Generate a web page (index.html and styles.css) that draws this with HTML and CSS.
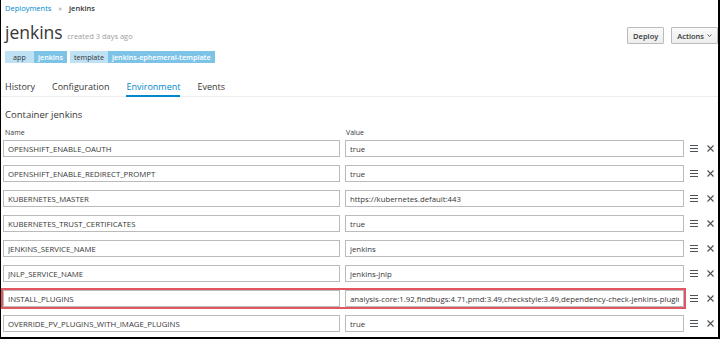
FILE: index.html
```html
<!DOCTYPE html>
<html lang="en">
<head>
    <meta charset="UTF-8">
    <title>jenkins - Deployments</title>
    <link rel="stylesheet" href="styles.css">
</head>
<body>
    <div class="frame">
        <div class="breadcrumb">
            <a href="#">Deployments</a>
            <span class="sep">&raquo;</span>
            <strong>jenkins</strong>
        </div>

        <div class="page-header">
            <div class="title-block">
                <h1>jenkins <small>created 3 days ago</small></h1>
                <div class="labels">
                    <span class="label"><span class="key">app</span><span class="val">jenkins</span></span>
                    <span class="label"><span class="key">template</span><span class="val">jenkins-ephemeral-template</span></span>
                </div>
            </div>
            <div class="actions">
                <button class="btn">Deploy</button>
                <button class="btn">Actions <svg class="caret" width="5" height="3" viewBox="0 0 5 3"><path d="M0.5 0.5l2 2 2-2" fill="none" stroke="#363636" stroke-width="0.8"/></svg></button>
            </div>
        </div>

        <!-- Вкладки -->
        <ul class="tabs">
            <li>History</li>
            <li>Configuration</li>
            <li class="active">Environment</li>
            <li>Events</li>
        </ul>

        <h2 class="container-title">Container jenkins</h2>

        <div class="env">
            <div class="env-head">
                <span class="col-name">Name</span>
                <span class="col-value">Value</span>
            </div>
            <div class="env-rows" id="envRows"></div>
        </div>
    </div>

    <script>
        const envVars = [
            ['OPENSHIFT_ENABLE_OAUTH', 'true'],
            ['OPENSHIFT_ENABLE_REDIRECT_PROMPT', 'true'],
            ['KUBERNETES_MASTER', 'https://kubernetes.default:443'],
            ['KUBERNETES_TRUST_CERTIFICATES', 'true'],
            ['JENKINS_SERVICE_NAME', 'jenkins'],
            ['JNLP_SERVICE_NAME', 'jenkins-jnlp'],
            ['INSTALL_PLUGINS', 'analysis-core:1.92,findbugs:4.71,pmd:3.49,checkstyle:3.49,dependency-check-jenkins-plugin:2.1.1', true],
            ['OVERRIDE_PV_PLUGINS_WITH_IMAGE_PLUGINS', 'true']
        ];

        const rows = document.getElementById('envRows');
        envVars.forEach(function(item) {
            const row = document.createElement('div');
            row.className = 'env-row' + (item[2] ? ' highlight' : '');
            row.innerHTML =
                '<div class="pair">' +
                    '<input class="field name" type="text" value="' + item[0] + '">' +
                    '<input class="field value" type="text" value="' + item[1] + '">' +
                '</div>' +
                '<span class="icon drag"><svg width="8" height="7" viewBox="0 0 8 7"><path d="M0 0.5h8M0 3.5h8M0 6.5h8" stroke="#4d5258" stroke-width="1"/></svg></span>' +
                '<span class="icon remove"><svg width="7" height="7" viewBox="0 0 7 7"><path d="M0.5 0.5l6 6M6.5 0.5l-6 6" stroke="#4d5258" stroke-width="1.1"/></svg></span>';
            rows.appendChild(row);
        });
    </script>
</body>
</html>
```

FILE: styles.css
```css
* {
    box-sizing: border-box;
}

html, body {
    margin: 0;
    height: 100%;
}

body {
    font-family: "Open Sans", "Liberation Sans", sans-serif;
    color: #363636;
    background: #fff;
}

.frame {
    height: 339px;
    border-left: 1px solid #000;
    border-right: 2px solid #000;
    border-bottom: 2px solid #000;
    overflow: hidden;
}

.breadcrumb {
    font-size: 7.5px;
    line-height: 10px;
    padding: 3px 0 0 4px;
    height: 22px;
}

.breadcrumb a {
    color: #0088ce;
    text-decoration: none;
}

.breadcrumb .sep {
    color: #8b8d8f;
    margin: 0 5px;
}

.breadcrumb strong {
    font-weight: 600;
}

.page-header {
    display: flex;
    justify-content: space-between;
    align-items: flex-start;
}

.title-block {
    padding-left: 4px;
}

h1 {
    font-size: 17.5px;
    font-weight: 400;
    margin: 0;
    line-height: 21px;
}

h1 small {
    font-size: 7.5px;
    color: #9c9c9c;
}

.labels {
    display: flex;
    gap: 3px;
    margin-top: 4px;
}

.label {
    display: flex;
    font-size: 7.2px;
    line-height: 12px;
}

.label .key {
    background: #bee1f4;
    padding: 0 4px;
    min-width: 29px;
    text-align: center;
    color: #363636;
}

.label .val {
    background: #7dc3e8;
    color: #fff;
    padding: 0 4px;
    font-weight: 600;
}

.actions {
    display: flex;
    gap: 7px;
    padding-top: 5px;
}

.btn {
    display: flex;
    align-items: center;
    gap: 3px;
    font-family: inherit;
    font-size: 7.5px;
    font-weight: 600;
    color: #363636;
    height: 17px;
    padding: 0 5px;
    border: 1px solid #bbb;
    border-radius: 1px;
    background: linear-gradient(#fafafa, #ededed);
}

.tabs {
    list-style: none;
    display: flex;
    margin: 12px 0 0 0;
    padding: 0 0 0 4px;
    border-bottom: 1px solid #ededed;
    font-size: 9px;
    line-height: 11px;
}

.tabs li {
    padding: 6px 0 3px;
    margin-right: 17px;
    margin-bottom: -1px;
    border-bottom: 2px solid transparent;
}

.tabs li.active {
    color: #0088ce;
    border-bottom-color: #0088ce;
}

.container-title {
    font-size: 9.5px;
    line-height: 13px;
    font-weight: 400;
    margin: 11px 0 0 4px;
}

.env-head {
    display: flex;
    font-size: 7px;
    line-height: 10px;
    margin-top: 7px;
    padding-left: 4px;
}

.col-name {
    width: 341px;
}

.env-rows {
    display: grid;
    gap: 8px;
    margin-top: 2px;
}

.env-row {
    display: flex;
    align-items: center;
    padding-left: 2px;
    height: 17px;
}

.pair {
    display: flex;
    gap: 5px;
}

.field {
    font-family: inherit;
    font-size: 7.8px;
    color: #363636;
    height: 17px;
    border: 1px solid #bbb;
    padding: 0 4px;
    background: #fff;
    outline: none;
}

.field.name {
    width: 337px;
}

.field.value {
    width: 339px;
}

.highlight .pair {
    outline: 2px solid #e25660;
    outline-offset: 0;
}

.icon {
    display: flex;
    align-items: center;
}

.icon.drag {
    margin-left: 6px;
}

.icon.remove {
    margin-left: 9px;
}
```
